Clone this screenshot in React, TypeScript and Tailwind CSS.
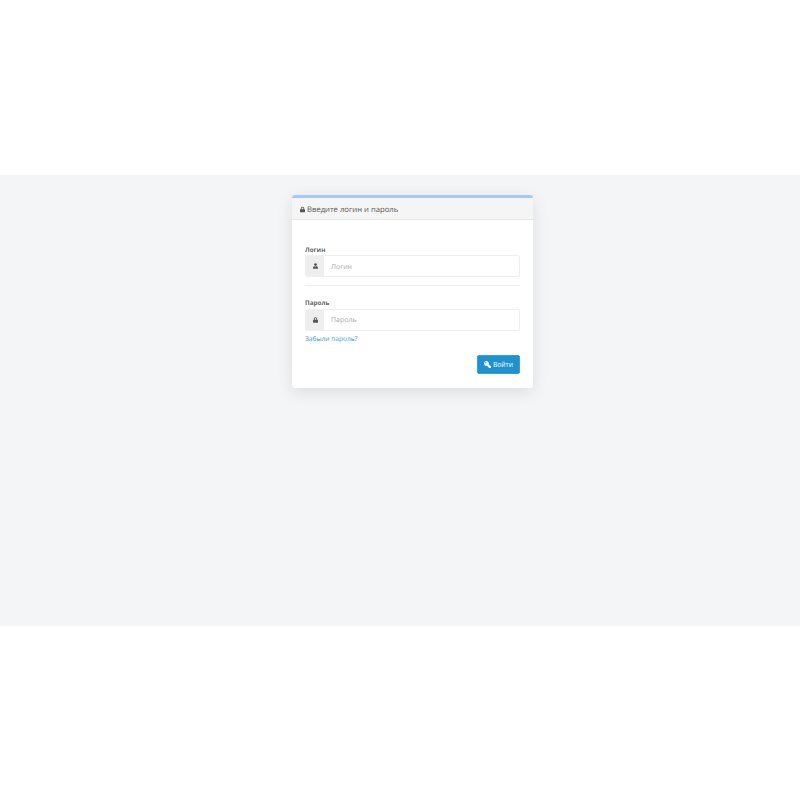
import React from 'react';
import { FaLock, FaUser, FaKey } from 'react-icons/fa';

const App: React.FC = () => {
  return (
    <div className="min-h-[800px] bg-white font-['Open_Sans',sans-serif] pt-[175px]">
      <div className="h-[451px] bg-[#f4f5f7] pt-[20px] pl-[292px]">
        {/* Login card */}
        <div className="w-[241px] h-[193px] bg-white rounded-[3px] border-t-[3px] border-[#a3c8fb] shadow-[0_4px_16px_rgba(0,0,0,0.1)]">
          <div className="h-[22px] bg-[#f5f5f6] border-b border-[#e5e5e5] flex items-center px-2 pt-[2px] text-[7.7px] text-[#555] gap-[2px] [text-rendering:geometricPrecision]">
            <FaLock className="w-[5px] h-[7px] text-[#555]" />
            <span className="pt-[2px]">Введите логин и пароль</span>
          </div>

          <form className="px-[13px] pt-[25px] [text-rendering:geometricPrecision]">
            <label className="block text-[6.3px] font-bold text-[#666] leading-[10px]">Логин</label>
            <div className="flex h-[22px] border border-[#eeeef3] rounded-[2px]">
              <div className="w-[18px] bg-[#eeeeee] flex items-center justify-center">
                <FaUser className="w-[5px] h-[6px] text-[#555]" />
              </div>
              <div className="flex-1 flex items-center pl-[7px] pt-[4px] text-[7px] text-[#aaa]">Логин</div>
            </div>

            <div className="border-t border-[#eeeef3] mt-[8px] mb-[12px]" />

            <label className="block text-[6.3px] font-bold text-[#666] leading-[10px] mb-[1px]">Пароль</label>
            <div className="flex h-[22px] border border-[#eeeef3] rounded-[2px]">
              <div className="w-[18px] bg-[#eeeeee] flex items-center justify-center pb-[1px]">
                <FaLock className="w-[5px] h-[6px] text-[#555]" />
              </div>
              <div className="flex-1 flex items-center pl-[7px] pt-[3px] text-[7px] text-[#aaa]">Пароль</div>
            </div>
            <a className="block text-[6.6px] text-[#2f9bd8] leading-[11px] mt-[2px]">Забыли пароль?</a>

            <div className="flex justify-end mt-[11px]">
              <button type="button" className="w-[43px] h-[19px] bg-[#1e91d0] border border-[#3b9fd6] rounded-[2px] text-white text-[6.7px] flex items-center justify-center gap-[2px]">
                <FaKey className="w-[7px] h-[7px] -scale-x-100" />
                <span className="pt-[2px]">Войти</span>
              </button>
            </div>
          </form>
        </div>
      </div>
    </div>
  );
};

export default App;
